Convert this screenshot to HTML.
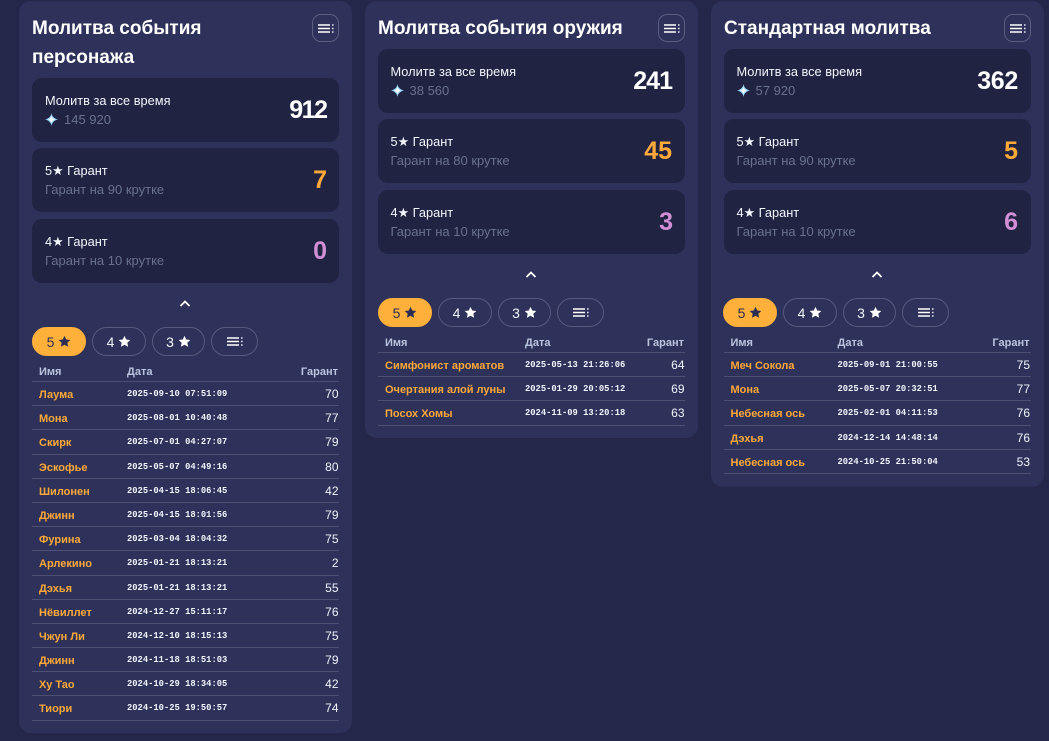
<!DOCTYPE html>
<html><head><meta charset="utf-8"><style>
*{box-sizing:border-box;margin:0;padding:0}
html,body{width:1049px;height:741px;overflow:hidden;background:#25274a;font-family:"Liberation Sans","DejaVu Sans",sans-serif;color:#fff}
.card{position:absolute;top:1px;width:333px;background:#2e3159;border-radius:12px}
.abs{position:absolute}
.title{left:13px;top:13px;width:270px;font-size:19px;line-height:29px;font-weight:700;color:#fff}
.ib{position:absolute;width:27px;height:28px;left:293px;top:13px;border:1px solid #5a5e80;border-radius:9px;display:flex;align-items:center;justify-content:center}
.stat{position:absolute;left:13px;width:307px;height:64px;background:#212343;border-radius:10px}
.stat .l{position:absolute;left:13px;top:14px;font-size:12.8px;line-height:17px;color:#f3f6fb;white-space:nowrap}
.stat .s{position:absolute;left:13px;top:33px;font-size:13px;line-height:17px;color:#69728c;white-space:nowrap}
.stat .n{position:absolute;right:13px;top:17px;font-size:25px;line-height:30px;font-weight:700;letter-spacing:-1px}
.c2 .stat .l,.c2 .stat .s,.c3 .stat .l,.c3 .stat .s{left:12.5px}
.o{color:#ffa938}.p{color:#d28fd6}
.chev{position:absolute;width:12px;height:8px}
.pill{position:absolute;height:29px;border:1px solid #565a7e;border-radius:14.5px;display:flex;align-items:center;justify-content:center;font-size:14px;color:#f3f6fb;gap:4px}
.pill.a{background:#ffb03b;border-color:#ffb03b;color:#2b2d52}
.tb{position:absolute;left:13px;width:307px}
.c3 .tb{left:12.5px}
.h,.r{position:relative;width:307px;border-bottom:1px solid #4d5072}
.h{height:20px;font-size:11px;font-weight:700;color:#b9c4de;border-bottom-color:#4a4e70}
.r{height:24.2px}
.h span,.r span{position:absolute;white-space:nowrap}
.h span{top:3px;line-height:14px}
.nm{left:7px;top:6px;font-size:11px;line-height:14px;font-weight:700;color:#ffa938}
.dt{top:6px;font-size:8.8px;line-height:12px;font-weight:700;font-family:"Liberation Mono",monospace;color:#f0f3fa}
.gr{right:0.5px;top:5px;font-size:12px;line-height:15px;color:#f0f3fa}
.c1 .d{left:95px}.c2 .d{left:147px}.c3 .d{left:114px}
</style></head><body>
<svg width="0" height="0" style="position:absolute"><defs>
<symbol id="m" viewBox="0 0 16 9"><path d="M0 1h12M0 4.500h12M0 8h12" stroke="#fff" stroke-width="1.600" fill="none"/><path d="M14 1h1.600M14 4.500h1.600M14 8h1.600" stroke="#e4e6f0" stroke-width="1.600" fill="none"/></symbol>
<symbol id="st" viewBox="0 0 24 24"><path d="M12 1.500l3.200 6.900 7.500.9-5.500 5.100 1.500 7.400L12 18.100l-6.700 3.700 1.500-7.400L1.300 9.300l7.500-.9z"/></symbol>
<symbol id="g" viewBox="0 0 14 14"><path d="M7 0C7.500 3.600 9.800 6 14 7 9.800 8 7.500 10.400 7 14 6.500 10.400 4.200 8 0 7 4.200 6 6.500 3.600 7 0z" fill="#8fd0f7"/><path d="M7 2.500C7.400 5 8.800 6.300 11.200 7 8.800 7.700 7.400 9 7 11.500 6.600 9 5.200 7.700 2.800 7 5.200 6.300 6.600 5 7 2.500z" fill="#f2faff"/></symbol>
</defs></svg>

<div class="card c1" style="left:19px;height:732px">
<div class="abs title">Молитва события персонажа</div>
<div class="ib"><svg width="16" height="9"><use href="#m"/></svg></div>
<div class="stat" style="top:77px"><div class="l">Молитв за все время</div><div class="s"><svg width="13" height="13" style="vertical-align:-2px;margin-right:6px"><use href="#g"/></svg>145 920</div><div class="n" style="right:12.500px;letter-spacing:-1.500px">912</div></div>
<div class="stat" style="top:147px"><div class="l">5★ Гарант</div><div class="s">Гарант на 90 крутке</div><div class="n o">7</div></div>
<div class="stat" style="top:218px"><div class="l">4★ Гарант</div><div class="s">Гарант на 10 крутке</div><div class="n p">0</div></div>
<svg class="chev" style="left:160px;top:298px" viewBox="0 0 12 8"><path d="M1.500 7L6 2.500 10.500 7" stroke="#fff" stroke-width="1.800" fill="none"/></svg>
<div class="pill a" style="left:13px;top:326px;width:54px">5 <svg width="13" height="13" fill="#2b2d52"><use href="#st"/></svg></div>
<div class="pill" style="left:73px;top:326px;width:54px">4 <svg width="13" height="13" fill="#fff"><use href="#st"/></svg></div>
<div class="pill" style="left:133px;top:326px;width:53px">3 <svg width="13" height="13" fill="#fff"><use href="#st"/></svg></div>
<div class="pill" style="left:192px;top:326px;width:47px"><svg width="16" height="9"><use href="#m"/></svg></div>
<div class="tb" style="top:361px">
<div class="h"><span style="left:7px">Имя</span><span class="d">Дата</span><span style="right:1px">Гарант</span></div>
<div class="r"><span class="nm">Лаума</span><span class="dt d">2025-09-10 07:51:09</span><span class="gr">70</span></div>
<div class="r"><span class="nm">Мона</span><span class="dt d">2025-08-01 10:40:48</span><span class="gr">77</span></div>
<div class="r"><span class="nm">Скирк</span><span class="dt d">2025-07-01 04:27:07</span><span class="gr">79</span></div>
<div class="r"><span class="nm">Эскофье</span><span class="dt d">2025-05-07 04:49:16</span><span class="gr">80</span></div>
<div class="r"><span class="nm">Шилонен</span><span class="dt d">2025-04-15 18:06:45</span><span class="gr">42</span></div>
<div class="r"><span class="nm">Джинн</span><span class="dt d">2025-04-15 18:01:56</span><span class="gr">79</span></div>
<div class="r"><span class="nm">Фурина</span><span class="dt d">2025-03-04 18:04:32</span><span class="gr">75</span></div>
<div class="r"><span class="nm">Арлекино</span><span class="dt d">2025-01-21 18:13:21</span><span class="gr">2</span></div>
<div class="r"><span class="nm">Дэхья</span><span class="dt d">2025-01-21 18:13:21</span><span class="gr">55</span></div>
<div class="r"><span class="nm">Нёвиллет</span><span class="dt d">2024-12-27 15:11:17</span><span class="gr">76</span></div>
<div class="r"><span class="nm">Чжун Ли</span><span class="dt d">2024-12-10 18:15:13</span><span class="gr">75</span></div>
<div class="r"><span class="nm">Джинн</span><span class="dt d">2024-11-18 18:51:03</span><span class="gr">79</span></div>
<div class="r"><span class="nm">Ху Тао</span><span class="dt d">2024-10-29 18:34:05</span><span class="gr">42</span></div>
<div class="r"><span class="nm">Тиори</span><span class="dt d">2024-10-25 19:50:57</span><span class="gr">74</span></div>
</div>
</div>

<div class="card c2" style="left:365px;height:437px">
<div class="abs title" style="width:280px">Молитва события оружия</div>
<div class="ib"><svg width="16" height="9"><use href="#m"/></svg></div>
<div class="stat" style="top:48px"><div class="l">Молитв за все время</div><div class="s"><svg width="13" height="13" style="vertical-align:-2px;margin-right:6px"><use href="#g"/></svg>38 560</div><div class="n">241</div></div>
<div class="stat" style="top:118px"><div class="l">5★ Гарант</div><div class="s">Гарант на 80 крутке</div><div class="n o" style="letter-spacing:0">45</div></div>
<div class="stat" style="top:189px"><div class="l">4★ Гарант</div><div class="s">Гарант на 10 крутке</div><div class="n p">3</div></div>
<svg class="chev" style="left:160px;top:269px" viewBox="0 0 12 8"><path d="M1.500 7L6 2.500 10.500 7" stroke="#fff" stroke-width="1.800" fill="none"/></svg>
<div class="pill a" style="left:13px;top:297px;width:54px">5 <svg width="13" height="13" fill="#2b2d52"><use href="#st"/></svg></div>
<div class="pill" style="left:73px;top:297px;width:54px">4 <svg width="13" height="13" fill="#fff"><use href="#st"/></svg></div>
<div class="pill" style="left:133px;top:297px;width:53px">3 <svg width="13" height="13" fill="#fff"><use href="#st"/></svg></div>
<div class="pill" style="left:192px;top:297px;width:47px"><svg width="16" height="9"><use href="#m"/></svg></div>
<div class="tb" style="top:332px">
<div class="h"><span style="left:7px">Имя</span><span class="d">Дата</span><span style="right:1px">Гарант</span></div>
<div class="r"><span class="nm">Симфонист ароматов</span><span class="dt d">2025-05-13 21:26:06</span><span class="gr">64</span></div>
<div class="r"><span class="nm">Очертания алой луны</span><span class="dt d">2025-01-29 20:05:12</span><span class="gr">69</span></div>
<div class="r"><span class="nm">Посох Хомы</span><span class="dt d">2024-11-09 13:20:18</span><span class="gr">63</span></div>
</div>
</div>

<div class="card c3" style="left:711px;height:486px">
<div class="abs title" style="width:280px">Стандартная молитва</div>
<div class="ib"><svg width="16" height="9"><use href="#m"/></svg></div>
<div class="stat" style="top:48px"><div class="l">Молитв за все время</div><div class="s"><svg width="13" height="13" style="vertical-align:-2px;margin-right:6px"><use href="#g"/></svg>57 920</div><div class="n" style="letter-spacing:-0.300px">362</div></div>
<div class="stat" style="top:118px"><div class="l">5★ Гарант</div><div class="s">Гарант на 90 крутке</div><div class="n o" style="right:14px">5</div></div>
<div class="stat" style="top:189px"><div class="l">4★ Гарант</div><div class="s">Гарант на 10 крутке</div><div class="n p" style="right:14px">6</div></div>
<svg class="chev" style="left:160px;top:269px" viewBox="0 0 12 8"><path d="M1.500 7L6 2.500 10.500 7" stroke="#fff" stroke-width="1.800" fill="none"/></svg>
<div class="pill a" style="left:12px;top:297px;width:54px">5 <svg width="13" height="13" fill="#2b2d52"><use href="#st"/></svg></div>
<div class="pill" style="left:72px;top:297px;width:54px">4 <svg width="13" height="13" fill="#fff"><use href="#st"/></svg></div>
<div class="pill" style="left:132px;top:297px;width:53px">3 <svg width="13" height="13" fill="#fff"><use href="#st"/></svg></div>
<div class="pill" style="left:191px;top:297px;width:47px"><svg width="16" height="9"><use href="#m"/></svg></div>
<div class="tb" style="top:332px">
<div class="h"><span style="left:7px">Имя</span><span class="d">Дата</span><span style="right:1px">Гарант</span></div>
<div class="r"><span class="nm">Меч Сокола</span><span class="dt d">2025-09-01 21:00:55</span><span class="gr">75</span></div>
<div class="r"><span class="nm">Мона</span><span class="dt d">2025-05-07 20:32:51</span><span class="gr">77</span></div>
<div class="r"><span class="nm">Небесная ось</span><span class="dt d">2025-02-01 04:11:53</span><span class="gr">76</span></div>
<div class="r"><span class="nm">Дэхья</span><span class="dt d">2024-12-14 14:48:14</span><span class="gr">76</span></div>
<div class="r"><span class="nm">Небесная ось</span><span class="dt d">2024-10-25 21:50:04</span><span class="gr">53</span></div>
</div>
</div>
</body></html>
